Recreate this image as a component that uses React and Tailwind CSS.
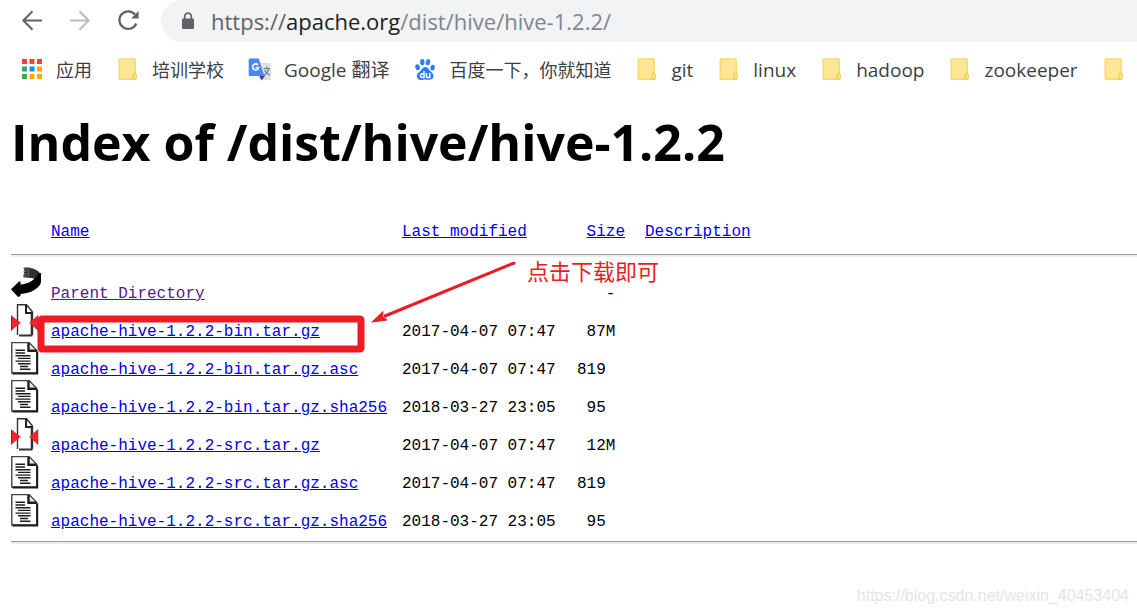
const bookmarks = [
  { label: '应用', icon: AppsIcon },
  { label: '培训学校', icon: FolderIcon },
  { label: 'Google 翻译', icon: TranslateIcon, latin: true },
  { label: '百度一下，你就知道', icon: BaiduIcon },
  { label: 'git', icon: FolderIcon, latin: true },
  { label: 'linux', icon: FolderIcon, latin: true },
  { label: 'hadoop', icon: FolderIcon, latin: true },
  { label: 'zookeeper', icon: FolderIcon, latin: true },
  { label: '', icon: FolderIcon },
];

// sizes keep their padding so the digits line up like in the Apache listing
const files = [
  { name: 'Parent Directory', date: '', size: '   -', icon: BackIcon, visited: true },
  { name: 'apache-hive-1.2.2-bin.tar.gz', date: '2017-04-07 07:47', size: ' 87M', icon: ArchiveIcon },
  { name: 'apache-hive-1.2.2-bin.tar.gz.asc', date: '2017-04-07 07:47', size: '819 ', icon: TextIcon },
  { name: 'apache-hive-1.2.2-bin.tar.gz.sha256', date: '2018-03-27 23:05', size: ' 95 ', icon: TextIcon },
  { name: 'apache-hive-1.2.2-src.tar.gz', date: '2017-04-07 07:47', size: ' 12M', icon: ArchiveIcon },
  { name: 'apache-hive-1.2.2-src.tar.gz.asc', date: '2017-04-07 07:47', size: '819 ', icon: TextIcon },
  { name: 'apache-hive-1.2.2-src.tar.gz.sha256', date: '2018-03-27 23:05', size: ' 95 ', icon: TextIcon },
];

function AppsIcon() {
  const colors = ['#f44336', '#f44336', '#f44336', '#34a853', '#1e88f5', '#fbab00', '#34a853', '#fbab00', '#fbab00'];
  return (
    <svg width="24" height="24" viewBox="0 0 24 24" className="shrink-0">
      {colors.map((c, i) => (
        <rect key={i} x={2 + (i % 3) * 7.5} y={1 + Math.floor(i / 3) * 7.5} width="5" height="5" fill={c} />
      ))}
    </svg>
  );
}

function FolderIcon() {
  return (
    <svg width="24" height="24" viewBox="0 0 24 24" className="shrink-0">
      <rect x="3.2" y=".9" width="16" height="20.4" rx="1" fill="#ffe694" stroke="#fad85f" strokeWidth="1.4" />
      <path d="M17 21.500V17a1.600 1.600 0 0 1 3.200 0v3.500a1 1 0 0 1-1 1Z" fill="#ffe694" stroke="#ecc94b" strokeWidth="1.100" />
    </svg>
  );
}

function TranslateIcon() {
  return (
    <svg width="24" height="24" viewBox="0 0 24 24" className="shrink-0">
      <path d="M9 5h13a1 1 0 0 1 1 1v15a1 1 0 0 1-1 1h-8Z" fill="#dfe1e3" />
      <path d="M11 17.500h6.500L13.500 22.500Z" fill="#3949ab" />
      <path d="M2 .5h8.800l5.500 17.500H2A1.300 1.300 0 0 1 .7 16.700V1.800A1.300 1.300 0 0 1 2 .5Z" fill="#4a87ee" />
      <path d="M9.900 6.900A3 3 0 1 0 10.600 9.500H7.600" fill="none" stroke="#fff" strokeWidth="1.600" />
      <path d="M15.500 10.500h6.500M18.800 8.800v1.700M20.800 10.500c-.6 3-2.500 5.300-4.300 6.500M16.600 12c.8 2.200 2.700 4 5 5.200" fill="none" stroke="#65808c" strokeWidth="1.200" />
    </svg>
  );
}

function BaiduIcon() {
  return (
    <svg width="24" height="24" viewBox="-2 -1 24 24" className="shrink-0">
      <g fill="#2b7cf6">
        <ellipse cx="7.300" cy="3.200" rx="2.200" ry="3.100" />
        <ellipse cx="13" cy="3.200" rx="2.200" ry="3.100" transform="rotate(10 13 3.200)" />
        <ellipse cx="2.600" cy="8.200" rx="2.300" ry="3" transform="rotate(-12 2.600 8.200)" />
        <ellipse cx="17.600" cy="8.700" rx="2.200" ry="2.900" transform="rotate(8 17.600 8.700)" />
        <path d="M10.200 8c2.400 0 3.200 2.200 4.600 3.600 1.700 1.600 3.900 3 3.700 5.700-.2 2.400-1.900 3.600-4.100 3.500-1.600 0-2.700-.4-4.200-.4s-2.600.5-4.200.5c-2.300 0-3.900-1.400-4.100-3.700-.2-2.700 2.300-4 3.900-5.600C7.200 10.200 7.800 8 10.200 8Z" />
      </g>
      <g fill="none" stroke="#fff" strokeWidth="1.500">
        <path d="M9 12v7M9.200 14.700H7.200a1.700 1.700 0 0 0-1.700 1.700v.5a1.700 1.700 0 0 0 1.700 1.700h2" />
        <path d="M11.400 14v3.200a1.400 1.400 0 0 0 1.400 1.400h2V14" />
      </g>
    </svg>
  );
}

function BackIcon() {
  return (
    <svg width="30" height="33" viewBox="0 0 30 33" className="block">
      <path d="M12.500 1.500H17c5.500.6 10 2.600 12.500 6.200L25 13.500c-3-1.600-7-2.300-12.500-2V8.500l1-1-1-1.500 1-1Z" fill="#303030" />
      <path d="M12.500 3h3.500M12.500 5.500h3M12.500 8h4M16 10h-3.500M17.500 3v7" stroke="#8c8c8c" strokeWidth=".6" />
      <path d="M30 7v9.500C28 22.500 20 27.300 9.500 28v2L7 31 0 23.200 8 15.500h1.500v3C17 17.800 23.500 15 27.500 7.500Z" fill="#000" />
    </svg>
  );
}

function ArchiveIcon() {
  return (
    <svg width="30" height="33" viewBox="0 0 30 33" className="block">
      <path d="M6.500.5h9l6 7.500v22.500h-15Z" fill="#fff" />
      <path d="M20.800 9v21.500M8 31.500h13.500" fill="none" stroke="#333" strokeWidth="2.200" />
      <path d="M6.500 31V.7h9L21.500 8v23" fill="none" stroke="#333" strokeWidth="1.400" />
      <path d="M15 1v8h6.500" fill="none" stroke="#222" strokeWidth="2" />
      <path d="M0 11.500l9.500 7.300L0 26.500Z" fill="#f0262c" stroke="#b32020" strokeWidth=".5" />
      <path d="M27 11.500l-8.500 7.300 8.500 7.700Z" fill="#f0262c" stroke="#b32020" strokeWidth=".5" />
      <path d="M.4 12v14.500" stroke="#7a1c1c" strokeWidth=".8" />
    </svg>
  );
}

function TextIcon() {
  return (
    <svg width="30" height="33" viewBox="0 0 30 33" className="block">
      <path d="M.8.500H18l7.800 8v22.500H.8Z" fill="#fff" stroke="#444" strokeWidth="1.400" />
      <path d="M1.500 31.400h24.700V9.500" fill="none" stroke="#1c1c1c" strokeWidth="2" />
      <path d="M17.500 1v7.800h8" fill="none" stroke="#1c1c1c" strokeWidth="2.400" />
      <path d="M19.500 7V4l3 3Z" fill="#ddd" />
      <path
        d="M4.500 8.300H14M4.500 11H14M4.500 13.700h15M7 16.400h12.500M4.500 19.100h15M7 21.800h12.500M9 24.500h8M9 27.200h10.500"
        stroke="#1c1c1c"
        strokeWidth="1.400"
      />
    </svg>
  );
}

function Toolbar() {
  return (
    <div className="flex h-[42px] items-center pl-5">
      <button type="button" aria-label="Back" className="mr-6">
        <svg width="24" height="24" viewBox="0 0 24 24" fill="none" stroke="#5f6368" strokeWidth="2">
          <path d="M22 11.500H3.500M12.500 2.300L3.300 11.500l9.200 9.200" />
        </svg>
      </button>
      <button type="button" aria-label="Forward" className="mr-6">
        <svg width="24" height="24" viewBox="0 0 24 24" fill="none" stroke="#babcbe" strokeWidth="2">
          <path d="M2 11.500h18.500M11.500 2.300l9.200 9.200-9.200 9.200" />
        </svg>
      </button>
      <button type="button" aria-label="Reload" className="mr-[21px]">
        <svg width="24" height="24" viewBox="0 0 24 24">
          <path d="M19 5.500A8.800 8.800 0 1 0 20.300 14.500" fill="none" stroke="#5f6368" strokeWidth="2.200" />
          <path d="M22.600 2v7.500h-7.500Z" fill="#5f6368" />
        </svg>
      </button>
      <div className="flex h-full flex-1 items-center rounded-l-full bg-[#f1f3f4] pl-5">
        <svg width="14" height="18" viewBox="0 0 14 18" className="mr-4 shrink-0">
          <path d="M3.700 8V4.500a3.300 3.300 0 0 1 6.600 0V8" fill="none" stroke="#5f6368" strokeWidth="1.700" />
          <rect x="1" y="6.500" width="12" height="10.500" rx="1.300" fill="#5f6368" />
        </svg>
        <div role="textbox" aria-label="Address" className="text-[22px] leading-7 whitespace-nowrap text-[#80868b]">
          <span className="text-[#5f6368]">https://</span>
          <span className="text-[#202124]">apache.org</span>/dist/hive/hive-1.2.2/
        </div>
      </div>
    </div>
  );
}

function BookmarksBar() {
  return (
    <nav className="flex h-[56px] items-center gap-6 overflow-hidden pl-5">
      {bookmarks.map(({ label, icon: Icon, latin }, i) => (
        <a
          key={i}
          href="#"
          aria-label={label || 'Folder'}
          className={`flex shrink-0 items-center gap-3 leading-6 text-[#3c4043] ${latin ? 'text-[19px]' : 'text-[18px]'}`}
        >
          <Icon />
          {label && <span>{label}</span>}
        </a>
      ))}
    </nav>
  );
}

function Rule() {
  return <hr className="h-[3px] border-t border-b-2 border-t-[#9a9a9a] border-b-[#eeeeee]" />;
}

function FileTable() {
  const link = 'text-[#0000ee] underline';
  return (
    <table className="w-full table-fixed border-collapse text-left font-['Liberation_Mono','Noto_Sans_CJK_SC',monospace] text-[16px] leading-5 whitespace-pre text-black">
      <colgroup>
        <col className="w-10" />
        <col className="w-[351px]" />
        <col className="w-[175px]" />
        <col className="w-[68px]" />
        <col />
      </colgroup>
      <thead>
        <tr className="h-8 align-top">
          <td />
          <th className="font-normal"><a href="#" className={link}>Name</a></th>
          <th className="font-normal"><a href="#" className={link}>Last modified</a></th>
          <th className="font-normal"> <a href="#" className={link}>Size</a></th>
          <th className="font-normal"><a href="#" className={link}>Description</a></th>
        </tr>
      </thead>
      <tbody>
        <tr>
          <td colSpan={5} className="pb-[9px]"><Rule /></td>
        </tr>
        {files.map(({ name, date, size, icon: Icon, visited }) => (
          <tr key={name} className="h-[38px] align-top">
            <td><Icon /></td>
            <td className="pt-[18px]">
              <a href="#" className={visited ? 'text-[#551a8b] underline' : link}>{name}</a>
            </td>
            <td className="pt-[18px]">{date}</td>
            <td className="pt-[18px]">{size}</td>
            <td />
          </tr>
        ))}
        <tr>
          <td colSpan={5} className="pt-[9px]"><Rule /></td>
        </tr>
      </tbody>
    </table>
  );
}

// red marker drawn over the listing
function Annotation() {
  return (
    <div className="pointer-events-none absolute top-10 left-0 text-[#ed1c24]">
      <svg width="520" height="100" viewBox="0 0 520 100">
        <rect x="30" y="57" width="320" height="30" rx="1" fill="none" stroke="#ed1c24" strokeWidth="7" />
        <path d="M503 1L374 54" stroke="#ed1c24" strokeWidth="3" strokeLinecap="round" />
        <path d="M361 60l11-10.500-.5 5 4.500 3.500Z" fill="#ed1c24" stroke="#ed1c24" />
      </svg>
      <span className="absolute top-[-5px] left-[516px] text-[22px] leading-7 whitespace-nowrap">点击下载即可</span>
    </div>
  );
}

export default function App() {
  return (
    <div className="min-h-screen overflow-hidden bg-white font-['Open_Sans','Noto_Sans_CJK_SC',sans-serif]">
      <header>
        <Toolbar />
        <BookmarksBar />
      </header>
      <main className="pl-[11px]">
        <h1 className="pt-3 text-[50px] leading-[64px] font-bold whitespace-nowrap text-black">Index of /dist/hive/hive-1.2.2</h1>
        <div className="relative mt-12">
          <FileTable />
          <Annotation />
        </div>
      </main>
      <footer className="pt-10 pr-2 text-right font-['Liberation_Sans',sans-serif] text-[16px] leading-6 text-[#e4e4e4]">
        https://blog.csdn.net/weixin_40453404
      </footer>
    </div>
  );
}
